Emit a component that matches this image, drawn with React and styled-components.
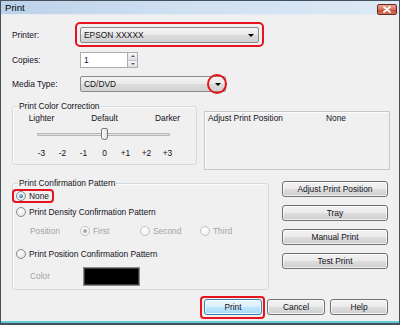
import React from "react";
import styled, { createGlobalStyle } from "styled-components";

const Global = createGlobalStyle`
  html, body { margin: 0; padding: 0; background: #ffffff; }
  body {
    font-family: "Liberation Sans", Arial, sans-serif;
    font-size: 8.4px;
    color: #15121c;
  }
  * { box-sizing: border-box; }
`;

const Window = styled.div`
  width: 400px;
  height: 325px;
  display: flex;
  flex-direction: column;
  background: #f0f0f0;
  border: 1px solid #46505a;
  border-bottom-width: 2px;
  box-shadow: inset 0 -2px 0 #5fcbd4;
`;

const TitleBar = styled.div`
  height: 14px;
  flex: none;
  display: flex;
  justify-content: space-between;
  align-items: flex-start;
  padding: 0 2px 0 4px;
  background: linear-gradient(to right, #bcd2e9 0%, #cfe0f1 45%, #dde9f6 100%);
  border-bottom: 1px solid #e4ebf2;
`;

const TitleText = styled.span`
  font-size: 9.6px;
  line-height: 14px;
  color: #000;
`;

const CloseBox = styled.div`
  width: 20px;
  height: 11px;
  margin-top: 3px;
  border: 1px solid #6d2a1c;
  border-radius: 2px;
  background: linear-gradient(#e9a593 0%, #d7705a 50%, #c34a32 55%, #d3715a 100%);
  display: flex;
  align-items: center;
  justify-content: center;
`;

const Body = styled.div`
  flex: 1;
  display: flex;
  flex-direction: column;
  padding: 0 11px;
`;

const FormRow = styled.div`
  display: flex;
  align-items: center;
  height: 16px;
  margin-top: ${(p) => p.$top}px;
`;

const FieldLabel = styled.span`
  width: 68px;
  flex: none;
`;

const Anchor = styled.div`
  position: relative;
  flex: none;
`;

const Combo = styled.div`
  width: ${(p) => p.$w}px;
  height: 16px;
  display: flex;
  align-items: center;
  justify-content: space-between;
  padding: 0 4px 0 3px;
  border: 1px solid #8b8b8b;
  border-radius: 2px;
  background: linear-gradient(#f4f4f4 0%, #eaeaea 48%, #dcdcdc 52%, #d2d2d2 100%);
`;

const Arrow = styled.span`
  width: 0;
  height: 0;
  border-left: 3px solid transparent;
  border-right: 3px solid transparent;
  border-top: 3px solid #000;
  margin-top: 1px;
`;

const Ring = styled.span`
  position: absolute;
  top: ${(p) => p.$t}px;
  right: ${(p) => p.$r}px;
  bottom: ${(p) => p.$b}px;
  left: ${(p) => p.$l}px;
  border: 2px solid #e5141e;
  border-radius: ${(p) => p.$radius || 5}px;
  pointer-events: none;
`;

const Circle = styled.span`
  position: absolute;
  top: -2px;
  right: -1px;
  width: 20px;
  height: 20px;
  border: 2px solid #e5141e;
  border-radius: 50%;
`;

const Spin = styled.div`
  display: flex;
  width: 58px;
  height: 16px;
`;

const SpinInput = styled.div`
  flex: 1;
  background: #fff;
  border: 1px solid #abadb3;
  border-right: none;
  padding-left: 3px;
  line-height: 14px;
`;

const SpinButtons = styled.div`
  width: 11px;
  display: flex;
  flex-direction: column;
  border: 1px solid #abadb3;
`;

const SpinButton = styled.div`
  flex: 1;
  display: flex;
  align-items: center;
  justify-content: center;
  background: linear-gradient(#f6f6f6, #dedede);
  & + & { border-top: 1px solid #c6c6c6; }
`;

const Tri = styled.span`
  width: 0;
  height: 0;
  border-left: 2px solid transparent;
  border-right: 2px solid transparent;
  ${(p) =>
    p.$up ? "border-bottom: 2px solid #46607a;" : "border-top: 2px solid #46607a;"}
`;

const SectionRow = styled.div`
  display: flex;
  align-items: flex-start;
  gap: ${(p) => p.$gap}px;
  margin-top: ${(p) => p.$top}px;
`;

const Group = styled.div`
  position: relative;
  width: ${(p) => p.$w}px;
  height: ${(p) => p.$h}px;
  flex: none;
  margin-top: ${(p) => p.$top || 0}px;
  border: 1px solid #d2dbe1;
  border-radius: 3px;
  box-shadow: inset 1px 1px 0 #fbfcfd;
  padding-top: ${(p) => p.$pad}px;
`;

const Legend = styled.span`
  position: absolute;
  top: -6px;
  left: 5px;
  padding: 0 1px;
  line-height: 10px;
  background: #f0f0f0;
`;

const Scale = styled.div`
  display: grid;
  grid-template-columns: repeat(7, 21px);
  justify-items: center;
  margin-left: 18px;
  line-height: 10px;
  margin-top: ${(p) => p.$top || 0}px;
  white-space: nowrap;
`;

const SliderBox = styled.div`
  position: relative;
  width: 133px;
  height: 12px;
  margin: 5px 0 0 24px;
  display: flex;
  align-items: center;
`;

const Track = styled.div`
  width: 100%;
  height: 3px;
  border: 1px solid #b4b4b4;
  border-radius: 1px;
  background: #e6e6e6;
`;

const Thumb = styled.div`
  position: absolute;
  left: 64px;
  top: 0;
  width: 7px;
  height: 12px;
  border: 1px solid #7a7a7a;
  border-radius: 2px 2px 3px 3px;
  background: linear-gradient(to right, #fdfdfd, #e2e2e2);
`;

const InfoBox = styled.div`
  width: 186px;
  height: 59px;
  flex: none;
  margin-top: 5px;
  border: 1px solid #c3c9ce;
  box-shadow: inset 1px 1px 0 #fbfbfb;
  padding: 1px 3px;
  display: grid;
  grid-template-columns: 118px auto;
  align-content: start;
  line-height: 10px;
`;

const OptionRow = styled.div`
  display: flex;
  align-items: center;
  height: 12px;
  margin-top: ${(p) => p.$top || 0}px;
  padding-left: ${(p) => p.$indent || 0}px;
  color: ${(p) => (p.$disabled ? "#a3a3a3" : "inherit")};
`;

const Option = styled.span`
  position: relative;
  display: inline-flex;
  align-items: center;
  gap: 3px;
  width: ${(p) => (p.$w ? `${p.$w}px` : "auto")};
  flex: none;
`;

const SubLabel = styled.span`
  width: ${(p) => p.$w}px;
  flex: none;
`;

const RadioDot = styled.span`
  width: 10px;
  height: 10px;
  flex: none;
  border-radius: 50%;
  border: 1px solid ${(p) => (p.$disabled ? "#c3c3c3" : "#8a8a8a")};
  background: ${(p) =>
    p.$disabled
      ? "radial-gradient(circle at 40% 35%, #ffffff, #ececec)"
      : "radial-gradient(circle at 40% 35%, #ffffff, #dcdcdc)"};
  display: flex;
  align-items: center;
  justify-content: center;
  &::after {
    content: "";
    width: 4px;
    height: 4px;
    border-radius: 50%;
    display: ${(p) => (p.$checked ? "block" : "none")};
    background: ${(p) =>
      p.$disabled
        ? "#a9a9a9"
        : "radial-gradient(circle at 40% 35%, #9fd8f8, #1d6fb5 70%, #0d3f70)"};
  }
`;

const Swatch = styled.div`
  width: 57px;
  height: 19px;
  border: 1px solid #8c8c8c;
  background: #000;
  box-shadow: inset 0 0 0 1px #3a3a3a;
`;

const ButtonColumn = styled.div`
  margin-left: auto;
  display: flex;
  flex-direction: column;
  gap: 8px;
`;

const Button = styled.button`
  position: relative;
  width: ${(p) => p.$w}px;
  height: 16px;
  padding: 0;
  font: inherit;
  color: #15121c;
  border: 1px solid ${(p) => (p.$default ? "#3c7fb1" : "#707070")};
  border-radius: 3px;
  background: ${(p) =>
    p.$default
      ? "linear-gradient(#eaf6fd 0%, #d9f0fc 48%, #bee6fd 52%, #a7d9f5 100%)"
      : "linear-gradient(#f2f2f2 0%, #ebebeb 48%, #dddddd 52%, #cfcfcf 100%)"};
  box-shadow: inset 0 0 0 1px rgba(255, 255, 255, 0.7);
`;

const Footer = styled.div`
  display: flex;
  justify-content: flex-end;
  gap: 5px;
  margin-top: 9px;
`;

function Radio({ label, checked, disabled }) {
  return (
    <>
      <RadioDot $checked={checked} $disabled={disabled} />
      <span>{label}</span>
    </>
  );
}

export default function App() {
  const scale = ["-3", "-2", "-1", "0", "+1", "+2", "+3"];
  return (
    <>
      <Global />
      <Window>
        <TitleBar>
          <TitleText>Print</TitleText>
          <CloseBox>
            <svg width="8" height="7" viewBox="0 0 8 7">
              <path d="M1 1 L7 6 M7 1 L1 6" stroke="#fff" strokeWidth="1.8" strokeLinecap="round" />
            </svg>
          </CloseBox>
        </TitleBar>
        <Body>
          <FormRow $top={12}>
            <FieldLabel>Printer:</FieldLabel>
            <Anchor>
              <Combo $w={179}>
                <span>EPSON XXXXX</span>
                <Arrow />
              </Combo>
              <Ring $t={-5} $r={-5} $b={-4} $l={-5} />
            </Anchor>
          </FormRow>
          <FormRow $top={9}>
            <FieldLabel>Copies:</FieldLabel>
            <Spin>
              <SpinInput>1</SpinInput>
              <SpinButtons>
                <SpinButton><Tri $up /></SpinButton>
                <SpinButton><Tri /></SpinButton>
              </SpinButtons>
            </Spin>
          </FormRow>
          <FormRow $top={8}>
            <FieldLabel>Media Type:</FieldLabel>
            <Anchor>
              <Combo $w={146}>
                <span>CD/DVD</span>
                <Arrow />
              </Combo>
              <Circle />
            </Anchor>
          </FormRow>

          <SectionRow $top={14} $gap={7}>
            <Group $w={185} $h={59} $pad={6}>
              <Legend>Print Color Correction</Legend>
              <Scale>
                <span>Lighter</span>
                <span />
                <span />
                <span>Default</span>
                <span />
                <span />
                <span>Darker</span>
              </Scale>
              <SliderBox>
                <Track />
                <Thumb />
              </SliderBox>
              <Scale $top={8}>
                {scale.map((s) => (
                  <span key={s}>{s}</span>
                ))}
              </Scale>
            </Group>
            <InfoBox>
              <span>Adjust Print Position</span>
              <span>None</span>
            </InfoBox>
          </SectionRow>

          <SectionRow $top={11} $gap={0}>
            <Group $w={257} $h={107} $top={2} $pad={6}>
              <Legend>Print Confirmation Pattern</Legend>
              <OptionRow $indent={3}>
                <Option>
                  <Radio label="None" checked />
                  <Ring $t={-2} $r={-5} $b={-2} $l={-4} $radius={4} />
                </Option>
              </OptionRow>
              <OptionRow $indent={3} $top={4}>
                <Option>
                  <Radio label="Print Density Confirmation Pattern" />
                </Option>
              </OptionRow>
              <OptionRow $indent={17} $top={7} $disabled>
                <SubLabel $w={50}>Position</SubLabel>
                <Option $w={60}>
                  <Radio label="First" checked disabled />
                </Option>
                <Option $w={60}>
                  <Radio label="Second" disabled />
                </Option>
                <Option $w={60}>
                  <Radio label="Third" disabled />
                </Option>
              </OptionRow>
              <OptionRow $indent={3} $top={11}>
                <Option>
                  <Radio label="Print Position Confirmation Pattern" />
                </Option>
              </OptionRow>
              <OptionRow $indent={17} $top={10} $disabled>
                <SubLabel $w={53}>Color</SubLabel>
                <Swatch />
              </OptionRow>
            </Group>
            <ButtonColumn>
              <Button $w={106}>Adjust Print Position</Button>
              <Button $w={106}>Tray</Button>
              <Button $w={106}>Manual Print</Button>
              <Button $w={106}>Test Print</Button>
            </ButtonColumn>
          </SectionRow>

          <Footer>
            <Anchor>
              <Button $w={58} $default>Print</Button>
              <Ring $t={-3} $r={-3} $b={-4} $l={-4} $radius={4} />
            </Anchor>
            <Button $w={58}>Cancel</Button>
            <Button $w={58}>Help</Button>
          </Footer>
        </Body>
      </Window>
    </>
  );
}
